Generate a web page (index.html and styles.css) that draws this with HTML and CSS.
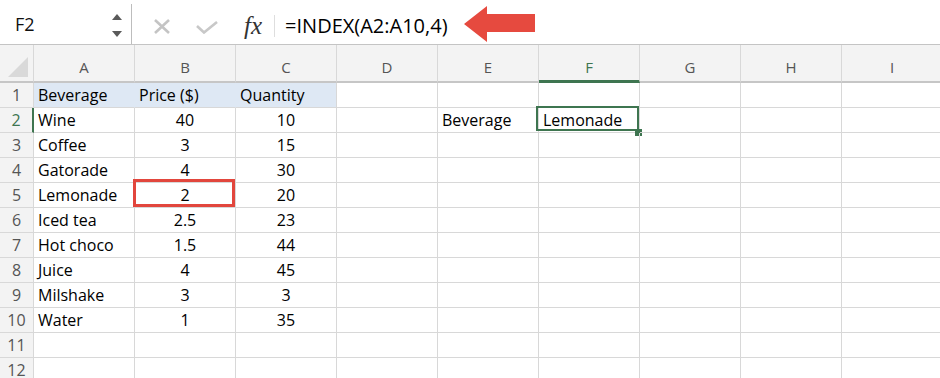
FILE: index.html
```html
<!DOCTYPE html>
<html>
<head>
<meta charset="utf-8">
<link rel="stylesheet" href="styles.css">
</head>
<body>
<div class="fbar">
  <div class="namebox">
    <span class="ref">F2</span>
    <svg class="spin" width="12" height="24" viewBox="0 0 12 24"><polygon points="6,0 11,6 1,6" fill="#5a5a5a"/><polygon points="1,17 11,17 6,23" fill="#5a5a5a"/></svg>
  </div>
  <div class="tools">
    <svg class="ic-x" width="18" height="15" viewBox="0 0 18 15"><path d="M2 1 L16 14 M16 1 L2 14" stroke="#c4c4c4" stroke-width="2.6" fill="none"/></svg>
    <svg class="ic-ok" width="22" height="13" viewBox="0 0 22 13"><polyline points="1,5 8,11.5 21,1" stroke="#c8c8c8" stroke-width="2.6" fill="none"/></svg>
    <span class="fx">fx</span>
    <span class="divider"></span>
    <span class="formula">=INDEX(A2:A10,4)</span>
  </div>
  <svg class="arrow" width="72" height="40" viewBox="0 0 72 40"><polygon points="0,20 23,2 23,10 71,10 71,28 23,28 23,38" fill="#e64a3f"/></svg>
</div>

<div class="sheet">
  <div class="corner"><svg width="33" height="36" viewBox="0 0 33 36"><polygon points="28,12 28,32 8,32" fill="#d9d9d9"/></svg></div>
  <div class="ch">A</div><div class="ch">B</div><div class="ch">C</div><div class="ch">D</div><div class="ch">E</div><div class="ch sel">F</div><div class="ch">G</div><div class="ch">H</div><div class="ch">I</div>

  <div class="rh">1</div><div class="c hl hl-in">Beverage</div><div class="c hl hl-in">Price ($)</div><div class="c hl">Quantity</div><div class="c"></div><div class="c"></div><div class="c"></div><div class="c"></div><div class="c"></div><div class="c"></div>

  <div class="rh rsel">2</div><div class="c">Wine</div><div class="c n">40</div><div class="c n">10</div><div class="c"></div><div class="c">Beverage</div><div class="c active">Lemonade<span class="selbox"></span><span class="handle"></span></div><div class="c"></div><div class="c"></div><div class="c"></div>

  <div class="rh">3</div><div class="c">Coffee</div><div class="c n">3</div><div class="c n">15</div><div class="c"></div><div class="c"></div><div class="c"></div><div class="c"></div><div class="c"></div><div class="c"></div>

  <div class="rh">4</div><div class="c">Gatorade</div><div class="c n">4</div><div class="c n">30</div><div class="c"></div><div class="c"></div><div class="c"></div><div class="c"></div><div class="c"></div><div class="c"></div>

  <div class="rh">5</div><div class="c">Lemonade</div><div class="c n mark">2<span class="redbox"></span></div><div class="c n">20</div><div class="c"></div><div class="c"></div><div class="c"></div><div class="c"></div><div class="c"></div><div class="c"></div>

  <div class="rh">6</div><div class="c">Iced tea</div><div class="c n">2.5</div><div class="c n">23</div><div class="c"></div><div class="c"></div><div class="c"></div><div class="c"></div><div class="c"></div><div class="c"></div>

  <div class="rh">7</div><div class="c">Hot choco</div><div class="c n">1.5</div><div class="c n">44</div><div class="c"></div><div class="c"></div><div class="c"></div><div class="c"></div><div class="c"></div><div class="c"></div>

  <div class="rh">8</div><div class="c">Juice</div><div class="c n">4</div><div class="c n">45</div><div class="c"></div><div class="c"></div><div class="c"></div><div class="c"></div><div class="c"></div><div class="c"></div>

  <div class="rh">9</div><div class="c">Milshake</div><div class="c n">3</div><div class="c n">3</div><div class="c"></div><div class="c"></div><div class="c"></div><div class="c"></div><div class="c"></div><div class="c"></div>

  <div class="rh">10</div><div class="c">Water</div><div class="c n">1</div><div class="c n">35</div><div class="c"></div><div class="c"></div><div class="c"></div><div class="c"></div><div class="c"></div><div class="c"></div>

  <div class="rh">11</div><div class="c"></div><div class="c"></div><div class="c"></div><div class="c"></div><div class="c"></div><div class="c"></div><div class="c"></div><div class="c"></div><div class="c"></div>

  <div class="rh">12</div><div class="c"></div><div class="c"></div><div class="c"></div><div class="c"></div><div class="c"></div><div class="c"></div><div class="c"></div><div class="c"></div><div class="c"></div>
</div>
</body>
</html>
```
FILE: styles.css
```css
html, body {
  margin: 0;
  padding: 0;
}
body {
  width: 940px;
  height: 378px;
  overflow: hidden;
  background: #ffffff;
  font-family: "Open Sans", "Liberation Sans", sans-serif;
  color: #000;
}

/* formula bar */
.fbar {
  position: relative;
  display: flex;
  height: 44px;
  border-bottom: 1px solid #c4c4c4;
}
.namebox {
  box-sizing: border-box;
  width: 132px;
  height: 40px;
  margin-top: 4px;
  border-right: 1px solid #bdbdbd;
  display: flex;
  align-items: center;
  padding: 0 8px 0 15px;
}
.ref {
  font-size: 18px;
  line-height: 40px;
  color: #111;
}
.spin {
  margin-left: auto;
  margin-top: 3px;
}
.tools {
  display: flex;
  align-items: center;
  height: 36px;
  padding-top: 8px;
}
.ic-x {
  margin-left: 21px;
}
.ic-ok {
  margin-left: 25px;
  margin-top: 2px;
}
.fx {
  margin-left: 26px;
  font-family: "Liberation Serif", "DejaVu Serif", serif;
  font-style: italic;
  font-size: 25px;
  line-height: 36px;
  color: #333;
}
.divider {
  margin-left: 12px;
  width: 1px;
  height: 22px;
  background: #dedede;
}
.formula {
  margin-left: 10px;
  font-size: 20px;
  line-height: 36px;
  color: #000;
}
.arrow {
  position: absolute;
  left: 464px;
  top: 4px;
}

/* sheet grid */
.sheet {
  display: grid;
  grid-template-columns: 34px repeat(9, 101px);
  grid-template-rows: 38px;
  grid-auto-rows: 25px;
}
.sheet > div {
  box-sizing: border-box;
  border-right: 1px solid #d8d8d8;
  border-bottom: 1px solid #d8d8d8;
  white-space: nowrap;
  overflow: visible;
}
.corner {
  background: #f3f3f3;
  border-bottom: 2px solid #c6c6c6 !important;
}
.corner svg {
  display: block;
}
.ch {
  background: #f3f3f3;
  border-bottom: 2px solid #c6c6c6 !important;
  text-align: center;
  font-size: 15px;
  line-height: 28px;
  padding-top: 8px;
  color: #555;
}
.ch.sel {
  color: #3e7550;
  border-bottom: 3px solid #3e7550 !important;
}
.rh {
  background: #f3f3f3;
  text-align: center;
  font-size: 16px;
  line-height: 24px;
  color: #555;
}
.rh.rsel {
  color: #3e7550;
  border-right: 2px solid #3e7550 !important;
}
.c {
  position: relative;
  font-size: 16px;
  line-height: 24px;
  padding-left: 4px;
}
.c.n {
  text-align: center;
  padding-left: 0;
}
.c.hl {
  background: #dee8f4;
}
.c.hl-in {
  border-right-color: #dee8f4 !important;
}
.selbox {
  position: absolute;
  left: -3px;
  right: 0;
  top: -2px;
  bottom: 1px;
  border: 2px solid #3e7550;
}
.handle {
  position: absolute;
  right: -3px;
  bottom: -4px;
  width: 7px;
  height: 7px;
  background: #3e7550;
}
.redbox {
  position: absolute;
  left: -2px;
  right: 0;
  top: -4px;
  bottom: 0;
  border: 3px solid #e2463d;
}
```
